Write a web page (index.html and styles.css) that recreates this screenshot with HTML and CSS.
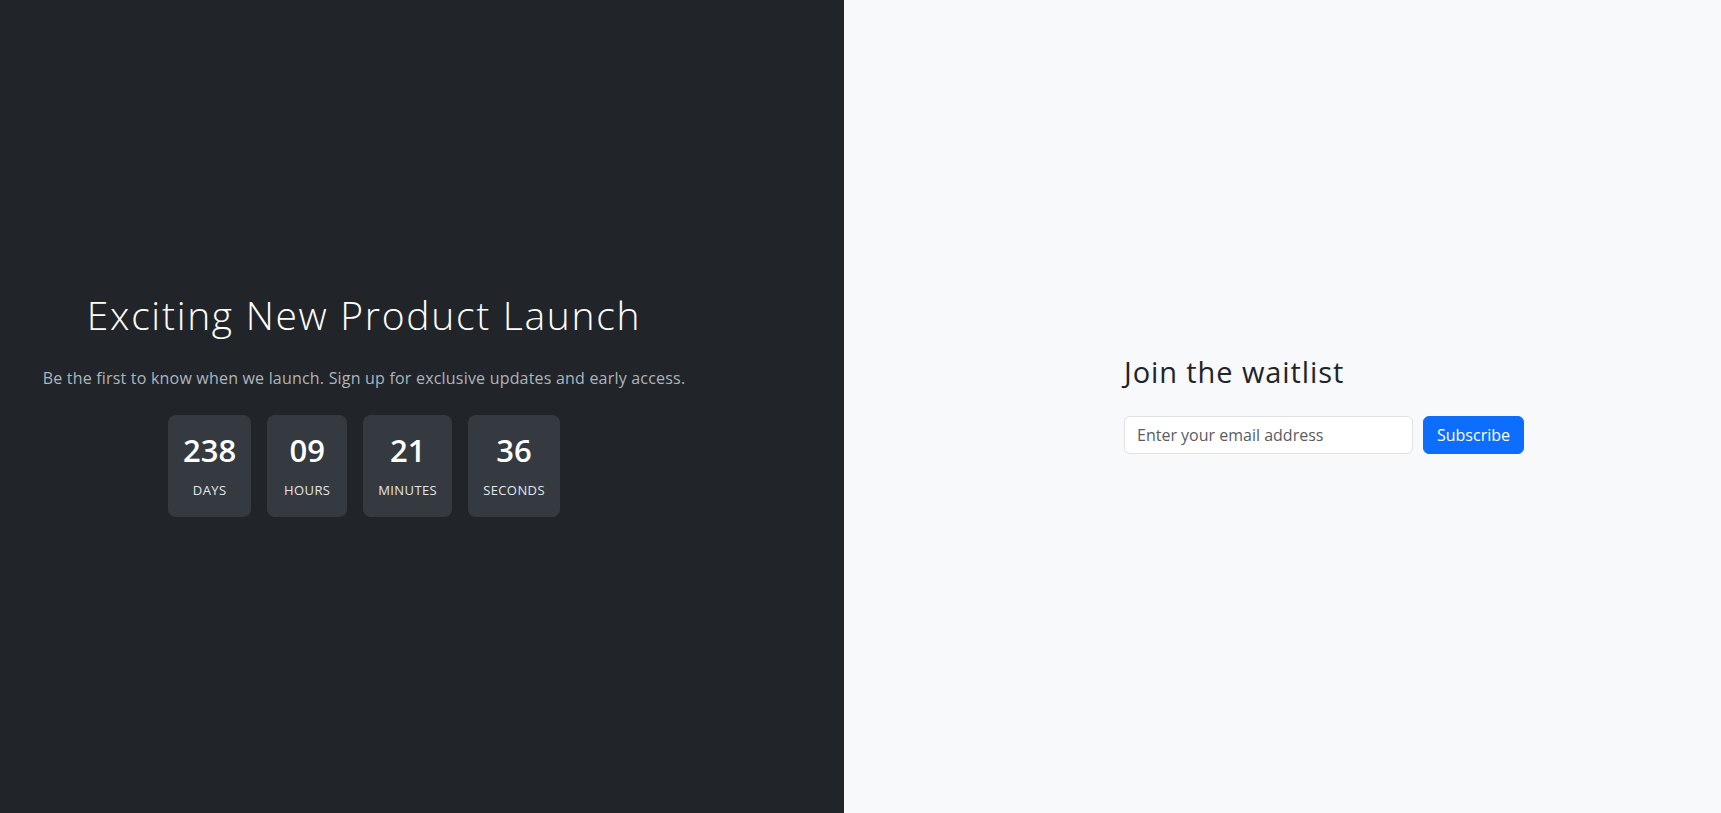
FILE: index.html
```html
<!DOCTYPE html>
<html lang="en">
<head>
  <meta charset="utf-8">
  <title>Exciting New Product Launch</title>
  <link rel="stylesheet" href="styles.css">
</head>
<body>
  <main class="split">
    <section class="launch">
      <div class="launch-inner">
        <h1 class="launch-title">Exciting New Product Launch</h1>
        <p class="launch-lead">Be the first to know when we launch. Sign up for exclusive updates and early access.</p>
        <div class="countdown">
          <div class="count-box">
            <div class="count-value">238</div>
            <div class="count-label">Days</div>
          </div>
          <div class="count-box">
            <div class="count-value">09</div>
            <div class="count-label">Hours</div>
          </div>
          <div class="count-box">
            <div class="count-value">21</div>
            <div class="count-label">Minutes</div>
          </div>
          <div class="count-box">
            <div class="count-value">36</div>
            <div class="count-label">Seconds</div>
          </div>
        </div>
      </div>
    </section>
    <section class="signup">
      <div class="signup-inner">
        <h2 class="signup-title">Join the waitlist</h2>
        <form class="signup-form" onsubmit="return false">
          <input class="email-input" type="email" placeholder="Enter your email address">
          <button class="subscribe-btn" type="submit">Subscribe</button>
        </form>
      </div>
    </section>
  </main>
</body>
</html>
```
FILE: styles.css
```css
* {
  box-sizing: border-box;
}

html, body {
  margin: 0;
  height: 100%;
}

body {
  font-family: "Open Sans", "Noto Sans", sans-serif;
  font-size: 16px;
  line-height: 1.5;
  color: #212529;
  background: #f8f9fa;
}

.split {
  display: grid;
  grid-template-columns: 844px 1fr;
  height: 100vh;
}

/* Left: dark launch panel */
.launch {
  background: #212529;
  color: #fff;
  display: flex;
  align-items: center;
  justify-content: center;
  padding-right: 116px;
}

.launch-inner {
  display: flex;
  flex-direction: column;
  align-items: center;
  text-align: center;
  padding-bottom: 4px;
}

.launch-title {
  margin: 0;
  font-size: 39px;
  font-weight: 300;
  line-height: 1.2;
  letter-spacing: 1.7px;
  white-space: nowrap;
}

.launch-lead {
  margin: 27px 0 0;
  font-size: 16px;
  line-height: 24px;
  letter-spacing: 0.2px;
  color: #adb5bd;
  white-space: nowrap;
}

.countdown {
  display: flex;
  gap: 16px;
  margin-top: 25px;
}

.count-box {
  min-width: 80px;
  padding: 17px 15px 16px;
  background: #343a40;
  border-radius: 8px;
  text-align: center;
}

.count-value {
  font-size: 31px;
  font-weight: 600;
  line-height: 1.2;
}

.count-label {
  margin-top: 12px;
  font-size: 13px;
  line-height: 19.5px;
  text-transform: uppercase;
  letter-spacing: 0.4px;
  color: #e3e6ea;
}

/* Right: waitlist form */
.signup {
  display: flex;
  align-items: center;
  padding-left: 280px;
}

.signup-inner {
  width: 400px;
  padding-bottom: 4px;
}

.signup-title {
  margin: 0 0 26px;
  font-size: 29px;
  font-weight: 400;
  line-height: 1.2;
  letter-spacing: 0.9px;
  color: #212529;
}

.signup-form {
  display: flex;
  gap: 10px;
}

.email-input {
  flex: 1;
  min-width: 0;
  height: 38px;
  padding: 6px 12px;
  font: inherit;
  font-size: 16px;
  color: #212529;
  background: #fff;
  border: 1px solid #dee2e6;
  border-radius: 6px;
  outline: none;
}

.email-input::placeholder {
  color: #595c5f;
  opacity: 1;
}

.subscribe-btn {
  height: 38px;
  padding: 6px 13px;
  font: inherit;
  font-size: 16px;
  color: #fff;
  background: #0d6efd;
  border: 1px solid #0d6efd;
  border-radius: 6px;
  cursor: pointer;
}
```
